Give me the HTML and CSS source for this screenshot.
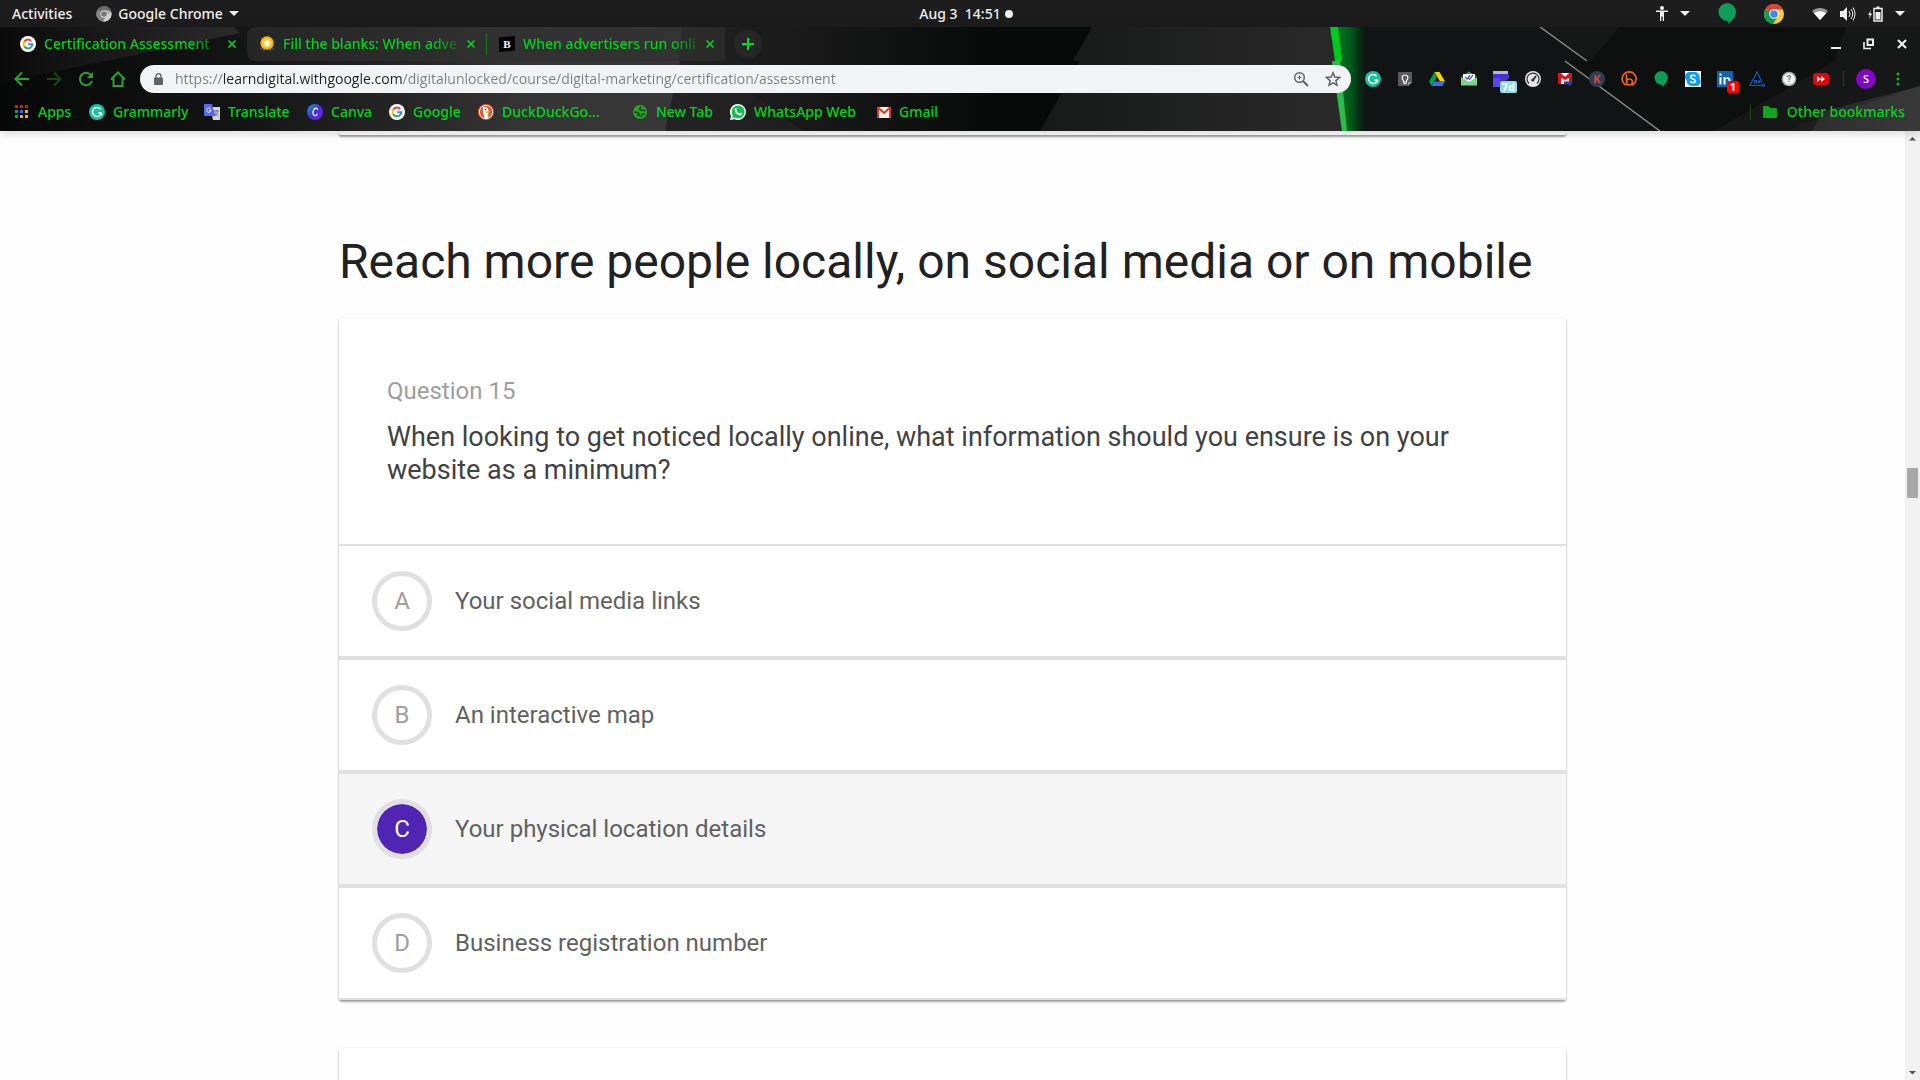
FILE: index.html
```html
<!DOCTYPE html>
<html lang="en">
<head>
<meta charset="utf-8">
<meta name="viewport" content="width=device-width, initial-scale=1">
<title>Certification Assessment</title>
<link rel="stylesheet" href="styles.css">
</head>
<body>
<svg class="defs" width="0" height="0" aria-hidden="true">
  <symbol id="caret" viewBox="0 0 10 5"><path d="M0 0h10L5 5z" fill="currentColor"/></symbol>
  <symbol id="x" viewBox="0 0 10 10"><path d="M1.500 1.500l7 7M8.500 1.500l-7 7" stroke="currentColor" stroke-width="1.700" fill="none"/></symbol>
  <symbol id="google" viewBox="0 0 16 16"><circle cx="8" cy="8" r="8" fill="#fff"/><g fill="none" stroke-width="2"><path d="M4.300 5.600A4.400 4.400 0 0 1 11.200 5" stroke="#ea4335"/><path d="M4.300 10.400a4.600 4.600 0 0 1 0-4.800" stroke="#fbbc05"/><path d="M11 11.200a4.400 4.400 0 0 1-6.700-.8" stroke="#34a853"/><path d="M8.200 8.200h4.200a4.400 4.400 0 0 1-1.400 3" stroke="#4285f4"/></g></symbol>
  <symbol id="grammarly" viewBox="0 0 16 16"><circle cx="8" cy="8" r="8" fill="#15c39a"/><path d="M11.600 5.200A4.500 4.500 0 1 0 12.400 9H9.200M12.400 9v2.400" fill="none" stroke="#fff" stroke-width="1.400"/></symbol>
  <symbol id="hangouts" viewBox="0 0 18 21"><path d="M9 0a9 9 0 0 1 9 9c0 5-4 9-7.800 12v-3A9 9 0 1 1 9 0z" fill="#0f9d58"/></symbol>
  <symbol id="chrome" viewBox="0 0 20 20"><circle cx="10" cy="10" r="10" fill="#ffcd40"/><path d="M10 10L1.400 5A10 10 0 0 0 9 20l5-8z" fill="#0f9d58"/><path d="M10 10L1.400 5A10 10 0 0 1 19 5.500H10z" fill="#db4437"/><circle cx="10" cy="10" r="4.800" fill="#fff"/><circle cx="10" cy="10" r="3.800" fill="#4285f4"/></symbol>
</svg>

<header class="system-bar">
  <div class="system-left">
    <button class="plain activities">Activities</button>
    <button class="plain app-menu">
      <svg width="16" height="16" viewBox="0 0 20 20" aria-hidden="true"><circle cx="10" cy="10" r="9.500" fill="#a9a9a9"/><path d="M10 10L1.500 5A10 10 0 0 0 9 19.500l5-8z" fill="#858585"/><path d="M10 10L1.500 5A10 10 0 0 1 19 5.500H10z" fill="#6b6b6b"/><path d="M12 13l-3 6.500a9.500 9.500 0 0 0 10-12z" fill="#d0d0d0"/><circle cx="10" cy="10" r="4.600" fill="#ddd"/><circle cx="10" cy="10" r="3.500" fill="#777"/></svg>
      Google Chrome
      <svg class="app-caret" width="10" height="5" aria-hidden="true"><use href="#caret"/></svg>
    </button>
  </div>
  <button class="plain clock">Aug 3&nbsp; 14:51<span class="clock-dot"></span></button>
  <div class="system-right">
    <button class="plain access" aria-label="Accessibility">
      <svg width="12" height="15" viewBox="0 0 12 15"><circle cx="6" cy="2" r="2" fill="#eee"/><path d="M0 4.500h12V6H8v9H6.700v-4.500H5.300V15H4V6H0z" fill="#eee"/></svg>
      <svg width="10" height="5"><use href="#caret"/></svg>
    </button>
    <button class="plain" aria-label="Hangouts"><svg width="18" height="21"><use href="#hangouts"/></svg></button>
    <button class="plain" aria-label="Chrome"><svg width="20" height="20"><use href="#chrome"/></svg></button>
    <button class="plain status" aria-label="System menu">
      <svg width="16" height="12" viewBox="0 0 16 12"><path d="M0 3.200C4.500-1 11.500-1 16 3.200L8 12z" fill="#999"/><path d="M2 5.400c3.500-3 8.500-3 12 0L8 12z" fill="#fff"/></svg>
      <svg width="16" height="16" viewBox="0 0 16 16" fill="none" stroke="#eee"><path d="M0 5h3l4-4v14l-4-4H0z" fill="#eee" stroke="none"/><path d="M9 5q2 3 0 6M11 3q3.500 5 0 10M13 1.500q4 6.500 0 13"/></svg>
      <svg width="15" height="16" viewBox="0 0 15 16"><path d="M3 4L0 9h2l-1 4 3-5.500H2z" fill="#eee"/><path d="M6 2.500h8V15H6z" fill="none" stroke="#eee" stroke-width="1.500"/><path d="M8.500.5h3V2h-3zM7.500 6h5v7.500h-5z" fill="#eee"/></svg>
      <svg width="10" height="5"><use href="#caret"/></svg>
    </button>
  </div>
</header>

<div class="browser">
  <svg class="theme-art" viewBox="0 0 1920 104" preserveAspectRatio="none" aria-hidden="true">
    <defs>
      <linearGradient id="base" gradientUnits="userSpaceOnUse" x1="0" y1="0" x2="1920" y2="0"><stop offset="0" stop-color="#070808"/><stop offset=".12" stop-color="#121414"/><stop offset=".2" stop-color="#232323"/><stop offset=".27" stop-color="#343434"/><stop offset=".36" stop-color="#373737"/></linearGradient>
      <linearGradient id="facet"><stop offset="0" stop-color="#0b0b0b"/><stop offset="1" stop-color="#2b2b2b"/></linearGradient>
      <linearGradient id="dark"><stop offset="0" stop-color="#242424"/><stop offset=".4" stop-color="#161616"/><stop offset=".75" stop-color="#060b09"/><stop offset="1" stop-color="#060b09"/></linearGradient>
      <linearGradient id="panel"><stop offset="0" stop-color="#171918"/><stop offset="1" stop-color="#2a2a2a"/></linearGradient>
      <linearGradient id="glow" gradientUnits="userSpaceOnUse" x1="1336" y1="0" x2="1366" y2="0"><stop offset="0" stop-color="#007c1d"/><stop offset=".5" stop-color="#00581a"/><stop offset=".8" stop-color="#082a12"/><stop offset="1" stop-color="#111414"/></linearGradient>
      <linearGradient id="corner"><stop offset="0" stop-color="#161616"/><stop offset="1" stop-color="#3b3b3b"/></linearGradient>
    </defs>
    <path d="M0 0h1920v104H0z" fill="url(#base)"/>
    <path d="M0 56L240 6 234 0H0z" fill="url(#facet)"/>
    <path d="M682 0l-3 34h1l-15 70h435V0z" fill="url(#dark)"/>
    <path d="M685 34l60 26 58 44H668z" fill="#232323" opacity=".6"/>
    <path d="M1092 0l-19 34h7l-40 70h310V0z" fill="url(#panel)"/>
    <path d="M1332 0h588v104h-575z" fill="#111414"/>
    <path d="M1334 0h34v104h-24z" fill="url(#glow)"/>
    <path d="M1330 0h8l4 34h-7z" fill="#00c81e"/><path d="M1332 34h8l7 70h-5z" fill="#2abb48"/>
    <path d="M1540 0l47 34h-22l95 70h260V0z" fill="#161717"/>
    <path d="M1620 0h226l-12 34-120 70h-54l-95-70h25z" fill="#0e0f0f"/>
    <path d="M1540 0l47 34M1565 34l95 70" stroke="#8b8b8b" stroke-width="1.500"/>
    <path d="M1780 104l140-45v45z" fill="url(#corner)"/>
    <path d="M1812 104l12-20 96-25v45z" fill="#383838" opacity=".6"/>
  </svg>

  <div class="tab-row">
    <div class="tab-strip">
      <div class="tab">
        <svg width="16" height="16" aria-hidden="true"><use href="#google"/></svg>
        <button class="plain tab-title">Certification Assessment</button>
        <button class="plain tab-close" aria-label="Close tab"><svg width="10" height="10"><use href="#x"/></svg></button>
      </div>
      <div class="tab tab-back tab-first">
        <svg width="16" height="16" viewBox="0 0 16 16" aria-hidden="true"><path d="M3 9l-2 5 2.500-.5L5 16l2-4zM13 9l2 5-2.500-.5L11 16l-2-4z" fill="#3c5078"/><circle cx="8" cy="7" r="6.700" fill="#f0b20a"/><circle cx="8" cy="7" r="5" fill="#ffc928"/><path d="M8 3.300l1.200 2.500 2.700.3-2 1.900.6 2.700L8 9.400l-2.500 1.300.6-2.700-2-1.900 2.700-.3z" fill="#fff"/></svg>
        <button class="plain tab-title">Fill the blanks: When adve</button>
        <button class="plain tab-close" aria-label="Close tab"><svg width="10" height="10"><use href="#x"/></svg></button>
      </div>
      <div class="tab tab-back tab-last">
        <svg width="16" height="16" viewBox="0 0 16 16" aria-hidden="true"><path d="M0 1.500L16 0v14.500L0 16z" fill="#000"/><text class="logo-slab" x="8" y="12" text-anchor="middle">B</text></svg>
        <button class="plain tab-title">When advertisers run onli</button>
        <button class="plain tab-close" aria-label="Close tab"><svg width="10" height="10"><use href="#x"/></svg></button>
      </div>
    </div>
    <button class="plain new-tab" aria-label="New tab"><svg width="12" height="12" viewBox="0 0 12 12"><path d="M6 0v12M0 6h12" stroke="#00e01e" stroke-width="2"/></svg></button>
    <div class="window-buttons">
      <button class="plain" aria-label="Minimize"><svg width="12" height="12" viewBox="0 0 12 12"><path d="M1 9h10v2H1z" fill="#eee"/></svg></button>
      <button class="plain" aria-label="Restore"><svg width="12" height="12" viewBox="0 0 12 12"><path d="M4.500 1.500H10V7H4.500z" fill="none" stroke="#eee" stroke-width="2"/><path d="M1 4v6.500h7" fill="none" stroke="#eee" stroke-width="1.600"/></svg></button>
      <button class="plain" aria-label="Close"><svg width="12" height="12" viewBox="0 0 12 12"><path d="M2 2l8 8M10 2l-8 8" stroke="#eee" stroke-width="2.200"/></svg></button>
    </div>
  </div>

  <div class="toolbar">
    <nav class="nav-buttons" aria-label="Navigation">
      <button class="plain" aria-label="Back"><svg width="16" height="16" viewBox="0 0 16 16"><path d="M15 8H2M8 1.500L1.500 8 8 14.500"/></svg></button>
      <button class="plain dim" aria-label="Forward"><svg width="16" height="16" viewBox="0 0 16 16"><path d="M1 8h13M8 1.500L14.500 8 8 14.500"/></svg></button>
      <button class="plain" aria-label="Reload"><svg width="16" height="16" viewBox="0 0 16 16"><path d="M14 10A6.200 6.200 0 1 1 13 4.200L14.500 6"/><path d="M15 1v6H9z" fill="#28a428" stroke="none"/></svg></button>
      <button class="plain" aria-label="Home"><svg width="16" height="16" viewBox="0 0 16 16"><path d="M1 8.500L8 1.500l7 7M3.500 7v8h9V7"/></svg></button>
    </nav>
    <div class="address">
      <svg width="9" height="12" viewBox="0 0 9 12" aria-hidden="true"><rect y="4.500" width="9" height="7.500" rx="1" fill="#5f6368"/><path d="M2 5V3.200a2.500 2.500 0 0 1 5 0V5" fill="none" stroke="#5f6368" stroke-width="1.300"/></svg>
      <input class="url" type="text" aria-label="Address" spellcheck="false" value="https://learndigital.withgoogle.com/digitalunlocked/course/digital-marketing/certification/assessment">
      <button class="plain" aria-label="Zoom"><svg width="16" height="16" viewBox="0 0 16 16" fill="none" stroke="#5f6368" stroke-width="1.500"><circle cx="6.500" cy="6.500" r="4.800"/><path d="M10 10l5 5" stroke-width="2"/><path d="M4.500 6.500h4M6.500 4.500v4" stroke-width="1.200"/></svg></button>
      <button class="plain" aria-label="Bookmark this page"><svg width="16" height="16" viewBox="0 0 16 16"><path d="M8 1.800l1.800 4.300 4.700.4-3.600 3.100 1.100 4.600L8 11.800l-4 2.400 1.100-4.600L1.500 6.500l4.700-.4z" fill="none" stroke="#5f6368" stroke-width="1.500"/></svg></button>
    </div>
    <div class="extensions">
      <button class="plain" aria-label="Grammarly"><svg width="16" height="16"><use href="#grammarly"/></svg></button>
      <button class="plain" aria-label="Keep"><svg width="16" height="16" viewBox="0 0 16 16"><path d="M1 1h14v10l-4 4H1z" fill="#5a5a5a"/><path d="M15 11h-4v4z" fill="#999"/><path d="M6.500 9.500C4.200 8 4.700 4 8 4s3.800 4 1.500 5.500V11h-3zM6.500 12.500h3" fill="none" stroke="#fff" stroke-width="1.200"/></svg></button>
      <button class="plain" aria-label="Drive"><svg width="16" height="16" viewBox="0 0 16 16"><path d="M5.500 1h5L16 10.500h-5z" fill="#ffd100"/><path d="M5.500 1L8 5.500 2.700 15 0 10.500z" fill="#0b9d4f"/><path d="M5.300 10.500H16L13.300 15H2.700z" fill="#3f6df2"/></svg></button>
      <button class="plain" aria-label="Mail tracker"><svg width="16" height="16" viewBox="0 0 16 16"><path d="M0 6l8-5.500L16 6z" fill="#2ba14b"/><path d="M2 3h12v8H2z" fill="#fff"/><path d="M0 6l8 5 8-5v8.500H0z" fill="#7ed58a"/><path d="M4 6l2 2 3-3.500M7.500 7.500l1 .8L12 4" fill="none" stroke="#6246d0" stroke-width="1.300"/></svg></button>
      <button class="plain" aria-label="Calendar"><svg width="16" height="16" viewBox="0 0 16 16"><path d="M0 0h15v3H0z" fill="#b9b9c8"/><path d="M0 3h16v4l-9 9H0z" fill="#4632d0"/><path d="M0 7h7v9H0z" fill="#5a48ec"/></svg><span class="badge badge-days">7d</span></button>
      <button class="plain" aria-label="Speed"><svg width="16" height="16" viewBox="0 0 16 16"><circle cx="8" cy="8" r="8" fill="#e4e4e4"/><path d="M4 12.500A6 6 0 1 1 12 12.500" fill="none" stroke="#333" stroke-width="1.200"/><path d="M8 9l3-4" stroke="#333" stroke-width="2"/><circle cx="7.800" cy="9" r="1.600" fill="#333"/></svg></button>
      <button class="plain" aria-label="Mail forward"><svg width="16" height="16" viewBox="0 0 16 16"><path d="M1 2h14v11H1z" fill="#e8e8e8"/><path d="M1 2h3v11H1zM12 2h3v11h-3z" fill="#d40d12"/><path d="M1 2h3l4 3.800L12 2h3v3L8 9 1 5z" fill="#e01217"/><path d="M4 2h8L8 5.500z" fill="#fff"/><path d="M7 10.500h5V8.500l4 3.500-4 3.500V13.500H7z" fill="#2b3d9e"/></svg></button>
      <button class="plain" aria-label="Keywords"><svg width="16" height="16" viewBox="0 0 16 16"><circle cx="8" cy="8" r="8" fill="#2d3e50"/><text class="logo-k" x="8" y="12" text-anchor="middle">K</text></svg></button>
      <button class="plain" aria-label="Links"><svg width="16" height="16" viewBox="0 0 16 16" fill="none" stroke="#ee6123" stroke-width="1.700"><path d="M5.500 14.300A7 7 0 1 1 11 14.200"/><path d="M5.500 3.500V11a3 3 0 1 0 3-3c-1.500 0-3 1-3 3"/></svg></button>
      <button class="plain" aria-label="Hangouts"><svg width="14" height="16"><use href="#hangouts"/></svg></button>
      <button class="plain" aria-label="Skype"><svg width="16" height="16" viewBox="0 0 16 16"><path d="M0 0h16v16H0z" fill="#fff"/><path d="M5 1h5a5 5 0 0 1 4.500 6.500A4.500 4.500 0 0 1 11 15H7A5.500 5.500 0 0 1 1.500 9 4.500 4.500 0 0 1 5 1z" fill="#0f9de8"/><path d="M10.800 5.300C9 3.500 5.500 4 5.500 6c0 2.300 5 1.500 5 3.900 0 2-3.600 2.300-5.300.5" fill="none" stroke="#fff" stroke-width="1.600"/></svg></button>
      <button class="plain" aria-label="LinkedIn"><svg width="16" height="16" viewBox="0 0 16 16"><path d="M0 0h16v16H0z" fill="#0d66b5"/><path d="M2.500 6h2v7.500h-2zM2.500 2.500h2v2h-2zM6.500 6h2v7.500h-2zM8.500 8c.8-2.600 5-2.700 5 1v4.500h-2V9.300c0-2-3-2-3 0z" fill="#fff"/></svg><span class="badge badge-count">1</span></button>
      <button class="plain" aria-label="Analytics"><svg width="16" height="16" viewBox="0 0 16 16" fill="none" stroke="#1c57b8" stroke-width="1.200"><path d="M14 14.500H1L8 1l5 10"/><circle cx="14.500" cy="14.300" r="1.200"/><path d="M5.500 9.500h2V12h-2zM9 9.500l2.500 2.500M11.500 9.500L9 12"/></svg></button>
      <button class="plain" aria-label="Help"><svg width="16" height="16" viewBox="0 0 16 16"><circle cx="8" cy="8" r="7.300" fill="#aaa"/><circle cx="8" cy="8" r="5.800" fill="#f2f2f2"/><text class="logo-q" x="8" y="11" text-anchor="middle">?</text></svg></button>
      <button class="plain" aria-label="Skip ads"><svg width="16" height="16" viewBox="0 0 16 16"><rect y="2" width="16" height="12" rx="3" fill="#e0060b"/><path d="M4 5l4 3-4 3zM8 5l4 3-4 3z" fill="#fff"/></svg></button>
    </div>
    <span class="divider"></span>
    <button class="plain avatar" aria-label="Profile">S</button>
    <button class="plain menu" aria-label="Menu"><svg width="4" height="14" viewBox="0 0 4 14" fill="#28a428"><circle cx="2" cy="2" r="1.600"/><circle cx="2" cy="7" r="1.600"/><circle cx="2" cy="12" r="1.600"/></svg></button>
  </div>

  <nav class="bookmarks" aria-label="Bookmarks">
    <div class="bookmark-list">
      <a href="#"><svg width="14" height="14" viewBox="0 0 14 14" aria-hidden="true"><path d="M0 0h3v3H0zM5 0h3v3H5zM10 0h3v3h-3z" fill="#f00f0f"/><path d="M0 5h3v3H0z" fill="#17a05a"/><path d="M5 5h3v3H5z" fill="#2a6cf0"/><path d="M10 5h3v3h-3zM5 10h3v3H5zM10 10h3v3h-3z" fill="#f5b20c"/><path d="M0 10h3v3H0z" fill="#17a05a"/></svg>Apps</a>
      <a href="#"><svg width="16" height="16" aria-hidden="true"><use href="#grammarly"/></svg>Grammarly</a>
      <a href="#"><svg width="16" height="16" viewBox="0 0 16 16" aria-hidden="true"><path d="M6 3h10v13H9z" fill="#d6d6d6"/><path d="M0 0h8l3.500 12H1a1 1 0 0 1-1-1z" fill="#5468f0"/><path d="M6.500 4.700A2.200 2.200 0 1 0 7 6.300H5" fill="none" stroke="#fff"/><path d="M10 7h5M12.500 6v1M14 7c-.5 2.500-2 4-3.500 5M11 8.500c1 2 2.200 3 3.500 3.800" fill="none" stroke="#667"/></svg>Translate</a>
      <a href="#"><svg width="16" height="16" viewBox="0 0 16 16" aria-hidden="true"><defs><linearGradient id="canva" x1="0" y1="0" x2="1" y2="1"><stop offset="0" stop-color="#10a5dc"/><stop offset=".5" stop-color="#4530dd"/><stop offset="1" stop-color="#7d18e5"/></linearGradient></defs><circle cx="8" cy="8" r="8" fill="url(#canva)"/><path d="M10.500 6c.3-2.300-2-2.500-3.300-.8C5.500 7.500 5.500 11 7.500 11.600c1.300.3 2.400-.7 3-1.800" fill="none" stroke="#fff" stroke-width="1.300"/></svg>Canva</a>
      <a href="#"><svg width="16" height="16" aria-hidden="true"><use href="#google"/></svg>Google</a>
      <a href="#"><svg width="16" height="16" viewBox="0 0 16 16" aria-hidden="true"><circle cx="8" cy="8" r="8" fill="#de5833"/><circle cx="8" cy="8" r="6.600" fill="none" stroke="#fff"/><path d="M5 3.500c3-1.500 5.500.5 5.500 3.500l-.5 7.200q-2 .6-3.500 0L5 8z" fill="#fff"/><path d="M7.500 7l5 .5-4.500 2z" fill="#fdb90a"/><circle cx="7.500" cy="5.500" r=".8" fill="#234"/><path d="M9 11.500l3-1.500v3.500z" fill="#5bb85b"/></svg>DuckDuckGo…</a>
      <a href="#"><svg width="16" height="16" viewBox="0 0 16 16" aria-hidden="true"><circle cx="8" cy="8" r="7" fill="#28a428"/><path d="M9 2.500L7.500 5.500l2 1 1.500-.5 2.500 1M2 8l3.500.5 2 1.500-.5 1.500-2-.5M8.500 13l2-2.500 2.500-.5" fill="none" stroke="#134d14" stroke-width="1.500"/></svg>New Tab</a>
      <a href="#"><svg width="16" height="16" viewBox="0 0 16 16" aria-hidden="true"><path d="M8 0a8 8 0 1 1-3.500 15.200L0 16l1-4A8 8 0 0 1 8 0z" fill="#fff"/><circle cx="8.100" cy="7.900" r="6.500" fill="#12c24f"/><path d="M2 14l.7-3L5 13.300z" fill="#12c24f"/><path d="M5 4.500c.5-.8 1.300-.6 1.500 0l.6 1.400-.7 1c.6 1.200 1.500 2 2.700 2.500l1-1 1.700.9c.4 1.600-1.400 2.400-2.600 2C6.500 10.500 4 7.500 5 4.500z" fill="#fff"/></svg>WhatsApp Web</a>
      <a href="#"><svg width="14" height="16" viewBox="0 0 14 16" aria-hidden="true"><path d="M0 3h14v11H0z" fill="#eee"/><path d="M1 3.500l6 5.500 6-5.500M1 3v11M13 3v11" fill="none" stroke="#d93a1c" stroke-width="2"/></svg>Gmail</a>
    </div>
    <a class="other" href="#"><svg width="14" height="12" viewBox="0 0 14 12" aria-hidden="true"><path d="M1 0h4.500L7 2h6a1 1 0 0 1 1 1v8a1 1 0 0 1-1 1H1a1 1 0 0 1-1-1V1a1 1 0 0 1 1-1z" fill="#14a31e"/></svg>Other bookmarks</a>
  </nav>
</div>

<div class="viewport">
  <main class="page">
    <div class="column">
      <section class="card card-above" aria-hidden="true"></section>
      <h1>Reach more people locally, on social media or on mobile</h1>
      <form class="card">
        <div class="question">
          <p class="number">Question 15</p>
          <h2>When looking to get noticed locally online, what information should you ensure is on your website as a minimum?</h2>
        </div>
        <label class="option"><span class="mark"><input type="radio" name="q15"><span class="letter">A</span></span>Your social media links</label>
        <label class="option"><span class="mark"><input type="radio" name="q15"><span class="letter">B</span></span>An interactive map</label>
        <label class="option chosen"><span class="mark"><input type="radio" name="q15" checked><span class="letter">C</span></span>Your physical location details</label>
        <label class="option"><span class="mark"><input type="radio" name="q15"><span class="letter">D</span></span>Business registration number</label>
      </form>
      <section class="card card-below" aria-hidden="true"></section>
    </div>
  </main>
  <div class="scrollbar" aria-hidden="true">
    <svg width="15" height="15" viewBox="0 0 15 15"><path d="M4 9.500h7L7.500 6z" fill="#505050"/></svg>
    <span class="track-above"></span>
    <span class="thumb"></span>
    <span class="track-below"></span>
    <svg width="15" height="15" viewBox="0 0 15 15"><path d="M4 6h7L7.500 9.500z" fill="#505050"/></svg>
  </div>
</div>
</body>
</html>
```
FILE: styles.css
```css
* { box-sizing: border-box; }

body {
  margin: 0;
  height: 100vh;
  display: flex;
  flex-direction: column;
  overflow: hidden;
  background: #fefefe;
  font-family: Roboto, "Liberation Sans", sans-serif;
}

svg { display: block; flex: none; }
.defs { position: absolute; }

.plain {
  border: 0;
  padding: 0;
  margin: 0;
  background: none;
  color: inherit;
  font: inherit;
  display: flex;
  align-items: center;
  justify-content: center;
}

/* Desktop bar */
.system-bar {
  flex: none;
  height: 27px;
  display: grid;
  grid-template-columns: 1fr auto 1fr;
  align-items: center;
  background: #1d1d1d;
  color: #eee;
  font: 500 14px/20px "Noto Sans", "DejaVu Sans", sans-serif;
}
.system-left, .system-right { display: flex; align-items: center; }
.system-left { padding-left: 12px; gap: 24px; }
.app-menu { gap: 6px; }
.clock { position: relative; }
.clock-dot {
  position: absolute;
  left: 100%;
  margin-left: 4px;
  width: 8px;
  height: 8px;
  border-radius: 50%;
  background: #eee;
}
.system-right { justify-content: flex-end; padding-right: 15px; gap: 28px; }
.access, .status { gap: 12px; }

/* Browser frame */
.browser {
  flex: none;
  position: relative;
  z-index: 1;
  color: #00d41c;
  font: 500 14px/20px "Noto Sans", "DejaVu Sans", sans-serif;
  box-shadow: 0 1px 10px rgba(0, 0, 0, .2);
}
.theme-art {
  position: absolute;
  inset: 0;
  width: 100%;
  height: 100%;
  z-index: -1;
}

.tab-row { height: 34px; display: flex; align-items: center; padding: 0 12px 0 8px; }
.tab-strip { display: flex; height: 34px; }
.tab {
  width: 239px;
  display: flex;
  align-items: center;
  gap: 8px;
  padding: 0 10px 0 12px;
}
.tab-back { background: rgba(48, 48, 48, .62); }
.tab-first { border-radius: 8px 0 0 8px; }
.tab-last { border-left: 1px solid; border-image: linear-gradient(transparent 20%, #0c7a16 20%, #0c7a16 80%, transparent 80%) 1; }
.tab-title {
  flex: 1;
  min-width: 0;
  display: block;
  text-align: left;
  white-space: nowrap;
  -webkit-mask-image: linear-gradient(90deg, #000 84%, transparent 106%);
  mask-image: linear-gradient(90deg, #000 84%, transparent 106%);
}
.new-tab {
  width: 28px;
  height: 28px;
  margin-left: 9px;
  border-radius: 50%;
  background: #262626;
}
.window-buttons { display: flex; gap: 21px; margin-left: auto; }

.toolbar { height: 36px; display: flex; align-items: center; padding: 0 6px; }
.nav-buttons { display: flex; margin-right: 6px; fill: none; stroke: #28a428; stroke-width: 2; }
.nav-buttons .plain { width: 32px; height: 28px; }
.dim { opacity: .4; }
.address {
  flex: 1;
  min-width: 0;
  height: 28px;
  display: flex;
  align-items: center;
  gap: 16px;
  padding: 0 10px 0 14px;
  border-radius: 14px;
  background: #f1f3f4;
}
.url {
  flex: 1;
  min-width: 0;
  height: 24px;
  margin-left: -4px;
  padding: 0;
  border: 0;
  outline: 0;
  font: 400 14px/24px "Open Sans", "Noto Sans", sans-serif;
  color: #202124;
  background: linear-gradient(90deg, #7b7f84 48px, #202124 48px, #202124 228px, #7b7f84 228px);
  -webkit-background-clip: text;
  background-clip: text;
  -webkit-text-fill-color: transparent;
}
.extensions { display: flex; margin-left: 6px; }
.extensions .plain { position: relative; width: 32px; height: 28px; }
.badge {
  position: absolute;
  top: 16px;
  right: 1px;
  height: 12px;
  padding: 0 2px;
  border-radius: 2px;
  color: #fff;
  font: 700 11px/12px "Noto Sans", sans-serif;
}
.badge-days { background: #8fdce8; right: 0; }
.badge-count { background: #f00; padding: 0 3px; right: 2px; }
.logo-slab { font: 700 11px "Liberation Serif", serif; fill: #fff; }
.logo-k { font: 700 11px Roboto, sans-serif; fill: #e0433d; }
.logo-q { font: 700 9px Roboto, sans-serif; fill: #777; }
.divider { width: 1px; height: 16px; margin: 0 12px 0 6px; background: #0f4a14; }
.avatar {
  width: 20px;
  height: 20px;
  border-radius: 50%;
  background: #8106c6;
  color: #fff;
  font-size: 11px;
}
.menu { width: 32px; height: 28px; margin-left: 6px; }

.bookmarks {
  height: 34px;
  padding: 0 15px 4px;
  display: flex;
  align-items: center;
  justify-content: space-between;
}
.bookmarks a { display: flex; align-items: center; gap: 8px; color: inherit; text-decoration: none; white-space: nowrap; }
.bookmark-list { display: grid; grid-template-columns: 74px 115px 103px 82px 89px 154px 98px 147px 80px; }
.bookmark-list a:first-child { gap: 9px; }
.bookmarks .other { height: 16px; padding-left: 12px; gap: 10px; border-left: 1px solid #0f4a14; }

/* Page */
.viewport { flex: 1; min-height: 0; display: flex; }
.page { flex: 1; min-width: 0; overflow: hidden; padding: 0 24px; }
.column { max-width: 1227px; margin: 0 auto; }
.card {
  border-radius: 3px;
  background: #fff;
  box-shadow: 0 1px 3px rgba(0, 0, 0, .14), 0 2px 2px rgba(0, 0, 0, .3);
}
.card-above { height: 4px; }
.card-below { height: 200px; margin-top: 48px; }
h1 {
  margin: 99px 0 28px;
  font-size: 48px;
  line-height: 56px;
  font-weight: 400;
  color: #212121;
}
.question { padding: 59px 48px 57px; }
.number { margin: 0 0 16px; font-size: 24px; line-height: 28px; color: #9e9e9e; }
h2 { margin: 0; font-size: 27px; line-height: 33px; font-weight: 400; color: #424242; }
.option {
  display: flex;
  align-items: center;
  gap: 23px;
  height: 114px;
  padding-left: 33px;
  border: solid #e0e0e0;
  border-width: 2px 0;
  font-size: 24px;
  line-height: 28px;
  color: #616161;
}
.chosen { background: #f5f5f5; }
.mark { display: grid; place-items: center; }
.mark input, .letter { grid-area: 1 / 1; }
.mark input {
  appearance: none;
  width: 60px;
  height: 60px;
  margin: 0;
  border: 5px solid #e0e0e0;
  border-radius: 50%;
  background-clip: padding-box;
}
.mark input:checked { background-color: #5124b3; }
.letter { color: #9e9e9e; font-size: 24px; }
.mark input:checked + .letter { color: #fff; }

.scrollbar { flex: none; width: 15px; display: flex; flex-direction: column; align-items: center; background: #f1f1f1; }
.thumb { width: 11px; height: 30px; background: #a8a8a8; }
.track-above { flex: 322; }
.track-below { flex: 567; }
```
